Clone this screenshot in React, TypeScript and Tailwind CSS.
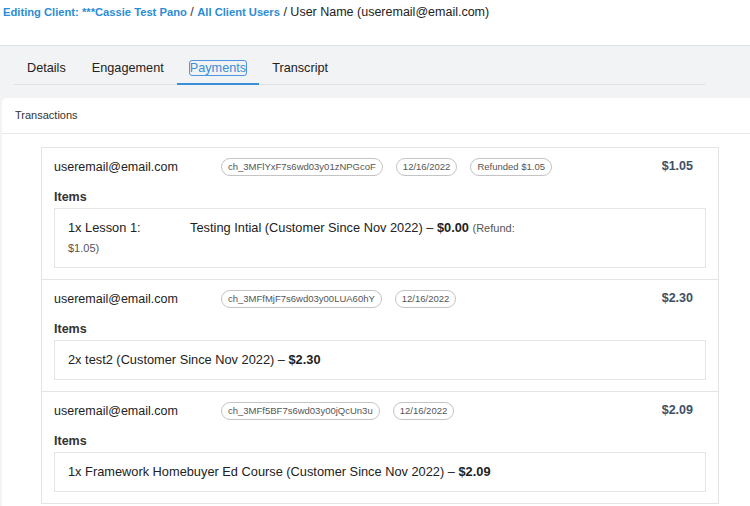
import React from "react";

type Txn = {
  email: string;
  charge: string;
  date: string;
  refunded?: string;
  amount: string;
  item: React.ReactNode;
};

const txns: Txn[] = [
  {
    email: "useremail@email.com",
    charge: "ch_3MFlYxF7s6wd03y01zNPGcoF",
    date: "12/16/2022",
    refunded: "Refunded $1.05",
    amount: "$1.05",
    item: (
      <>
        <span className="whitespace-pre">1x Lesson 1:              Testing Intial (Customer Since Nov 2022) – </span>
        <b>$0.00</b>{" "}
        <span className="text-[11px] text-[#555]">(Refund:</span>
        <br />
        <span className="text-[11px] leading-[16px] text-[#555]">$1.05)</span>
      </>
    ),
  },
  {
    email: "useremail@email.com",
    charge: "ch_3MFfMjF7s6wd03y00LUA60hY",
    date: "12/16/2022",
    amount: "$2.30",
    item: (
      <>
        2x test2 (Customer Since Nov 2022) – <b>$2.30</b>
      </>
    ),
  },
  {
    email: "useremail@email.com",
    charge: "ch_3MFf5BF7s6wd03y00jQcUn3u",
    date: "12/16/2022",
    amount: "$2.09",
    item: (
      <>
        1x Framework Homebuyer Ed Course (Customer Since Nov 2022) – <b>$2.09</b>
      </>
    ),
  },
];

const tabs = ["Details", "Engagement", "Payments", "Transcript"];

function Chip({ children }: { children: React.ReactNode }) {
  return (
    <span className="inline-flex h-[18px] items-center rounded-full border border-[#c4c4c4] px-[6px] text-[9.5px] text-[#555]">
      {children}
    </span>
  );
}

function TxnCard({ t, first }: { t: Txn; first: boolean }) {
  return (
    <div className={`border-x border-b border-[#e4e4e4] px-[12px] pt-[10px] pb-[11px] ${first ? "border-t" : ""}`}>
      {/* header row */}
      <div className="flex h-[18px] items-center">
        <span className="w-[167px] shrink-0 text-[12.5px] text-[#222]">{t.email}</span>
        <div className="flex items-center gap-[13px]">
          <Chip>{t.charge}</Chip>
          <Chip>{t.date}</Chip>
          {t.refunded && <Chip>{t.refunded}</Chip>}
        </div>
        <span className="ml-auto mr-[13px] -mt-[2px] text-[12.5px] font-bold text-[#3d5064]">{t.amount}</span>
      </div>

      <div className="mt-[13px] text-[12.5px] leading-[16px] font-bold text-[#333]">Items</div>
      <div className="mt-[3px] border border-[#e6e6e6] px-[13px] pt-[9px] pb-[10px] text-[12.8px] leading-[19px] text-[#222]">
        {t.item}
      </div>
    </div>
  );
}

export default function App() {
  return (
    <div className="h-[506px] w-[750px] overflow-hidden bg-[#f1f3f5]" style={{ fontFamily: "'Liberation Sans', Arial, sans-serif" }}>
      {/* Breadcrumb */}
      <div className="h-[46px] border-b border-[#d6e3ea] bg-white pl-[3px] pt-[4px] text-[12.5px] leading-[16px]">
        <span className="text-[11.2px] font-bold text-[#2b8dd5]">Editing Client: ***Cassie Test Pano</span>
        <span className="text-[#333]"> / </span>
        <span className="text-[11.2px] font-bold text-[#2b8dd5]">All Client Users</span>
        <span className="text-[#222]"> / User Name (useremail@email.com)</span>
      </div>

      {/* Tabs */}
      <div className="pt-[14px]">
        <div className="ml-[14px] mr-[45px] flex border-b border-[#dde1e4]">
          {tabs.map((tab) => {
            const active = tab === "Payments";
            return (
              <div
                key={tab}
                className={`-mb-px px-[13px] pb-[6px] text-[12.7px] leading-[17px] ${
                  active ? "border-b-2 border-[#3a8fd6] text-[#3a8fd8]" : "border-b-2 border-transparent text-[#222]"
                }`}
              >
                <span className={active ? "rounded-[2px] outline outline-1 outline-offset-0 outline-[#4f95e6]" : ""}>{tab}</span>
              </div>
            );
          })}
        </div>
      </div>

      {/* Panel */}
      <div className="ml-[2px] mt-[13px] rounded-tl-[5px] bg-white">
        <div className="flex h-[36px] items-center border-b border-[#e8e8e8] pl-[13px] text-[11px] text-[#333]">
          Transactions
        </div>
        <div className="pt-[13px] pb-[20px]">
          <div className="ml-[39px] w-[678px]">
            {txns.map((t, i) => (
              <TxnCard key={t.charge} t={t} first={i === 0} />
            ))}
          </div>
        </div>
      </div>
    </div>
  );
}
